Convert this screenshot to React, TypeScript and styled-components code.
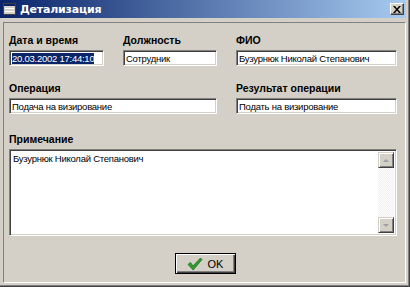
import * as React from "react"
import styled, { createGlobalStyle } from "styled-components"

const GlobalStyle = createGlobalStyle`
  html, body {
    margin: 0;
    padding: 0;
    background: #d4d0c8;
  }
  body {
    font-family: "Liberation Sans", Arial, sans-serif;
    font-size: 9.5px;
  }
`

function App() {
  return (
    <>
      <GlobalStyle />
      <Window>
        <TitleBar>
          <WindowIcon />
          <Title>Детализация</Title>
          <CloseButton>
            <svg width="8" height="7" viewBox="0 0 8 7">
              <path d="M0 0h2l2 2.5L6 0h2L5 3.5 8 7H6L4 4.5 2 7H0l3-3.5z" fill="#000" />
            </svg>
          </CloseButton>
        </TitleBar>
        <Client>
          <Bevel>
            <Fields>
              <Field>
                <Label>Дата и время</Label>
                <Edit>
                  <Selected>20.03.2002 17:44:10</Selected>
                </Edit>
              </Field>
              <Field>
                <Label>Должность</Label>
                <Edit>Сотрудник</Edit>
              </Field>
              <Field>
                <Label>ФИО</Label>
                <Edit>Бузурнюк Николай Степанович</Edit>
              </Field>
              <Field $span={2}>
                <Label>Операция</Label>
                <Edit>Подача на визирование</Edit>
              </Field>
              <Field>
                <Label>Результат операции</Label>
                <Edit>Подать на визирование</Edit>
              </Field>
              <Field $span={3} $offset={3}>
                <Label>Примечание</Label>
                <Memo>
                  <MemoText>Бузурнюк Николай Степанович</MemoText>
                  <ScrollBar>
                    <ScrollButton>
                      <Arrow $dir="up" />
                    </ScrollButton>
                    <ScrollButton>
                      <Arrow $dir="down" />
                    </ScrollButton>
                  </ScrollBar>
                </Memo>
              </Field>
            </Fields>
            <Footer>
              <OkButton>
                <svg width="16" height="14" viewBox="0 0 16 14">
                  <path
                    d="M1 7.5 L3.5 5.5 L6 9 L13.5 1 L15 2.5 L6.2 13 Z"
                    fill="#2e9e2e"
                    stroke="#1b6e1b"
                    strokeWidth="0.8"
                    strokeLinejoin="round"
                  />
                </svg>
                <span>OK</span>
              </OkButton>
            </Footer>
          </Bevel>
        </Client>
      </Window>
    </>
  )
}
export default App

function WindowIcon() {
  return (
    <svg width="13" height="12" viewBox="0 0 13 12">
      <rect x="0.5" y="0.5" width="12" height="11" fill="#d4d0c8" stroke="#404040" />
      <rect x="1" y="1" width="11" height="2" fill="#0a246a" />
      <rect x="2" y="5" width="9" height="1" fill="#ffffff" />
      <rect x="2" y="8" width="9" height="1" fill="#ffffff" />
    </svg>
  )
}

const Window = styled.div`
  width: 410px;
  height: 287px;
  box-sizing: border-box;
  display: flex;
  flex-direction: column;
  background: #d4d0c8;
  border-right: 1px solid #404040;
  border-bottom: 1px solid #404040;
  box-shadow: inset -1px -1px 0 #808080;
  padding: 0 3px 2px 0;
`

const TitleBar = styled.div`
  height: 18px;
  display: flex;
  align-items: center;
  padding: 0 2px 0 3px;
  background: linear-gradient(to right, #0a246a, #a6caf0);
  color: #fff;
`

const Title = styled.div`
  flex: 1;
  margin-left: 4px;
  font-family: Tahoma, "DejaVu Sans", "Liberation Sans", sans-serif;
  font-weight: bold;
  font-size: 11px;
  letter-spacing: -0.2px;
`

const CloseButton = styled.div`
  width: 14px;
  height: 12px;
  box-sizing: border-box;
  display: flex;
  align-items: center;
  justify-content: center;
  background: #d4d0c8;
  border-top: 1px solid #fff;
  border-left: 1px solid #fff;
  border-right: 1px solid #404040;
  border-bottom: 1px solid #404040;
  box-shadow: inset -1px -1px 0 #808080;
`

const Client = styled.div`
  flex: 1;
  display: flex;
  padding: 4px 0 1px 3px;
`

const Bevel = styled.div`
  flex: 1;
  display: flex;
  flex-direction: column;
  border-top: 1px solid #808080;
  border-left: 1px solid #808080;
  border-right: 1px solid #fff;
  border-bottom: 1px solid #fff;
  padding: 11px 0 0 5px;
`

const Fields = styled.div`
  display: grid;
  grid-template-columns: 95px 94px 161px;
  column-gap: 19px;
  row-gap: 16px;
`

const Field = styled.div<{ $span?: number; $offset?: number }>`
  display: flex;
  flex-direction: column;
  gap: 3px;
  grid-column: span ${(p) => p.$span ?? 1};
  margin-top: ${(p) => p.$offset ?? 0}px;
`

const Label = styled.div`
  height: 13px;
  line-height: 13px;
  font-family: "Liberation Sans", Arial, sans-serif;
  font-weight: bold;
  font-size: 10.5px;
  color: #000;
`

const Sunken = styled.div`
  box-sizing: border-box;
  background: #fff;
  border-top: 1px solid #808080;
  border-left: 1px solid #808080;
  border-right: 1px solid #fff;
  border-bottom: 1px solid #fff;
  box-shadow: inset 1px 1px 0 #404040, inset -1px -1px 0 #d4d0c8;
`

const Edit = styled(Sunken)`
  height: 16px;
  padding: 2px 2px 0 2px;
  line-height: 12px;
  white-space: nowrap;
  overflow: hidden;
  letter-spacing: -0.25px;
  color: #000;
`

const Selected = styled.span`
  background: #0a246a;
  color: #fff;
`

const Memo = styled(Sunken)`
  height: 87px;
  display: flex;
`

const MemoText = styled.div`
  flex: 1;
  padding: 3px 3px;
  line-height: 12px;
  letter-spacing: -0.25px;
`

const ScrollBar = styled.div`
  width: 16px;
  margin: 2px 2px 2px 0;
  display: flex;
  flex-direction: column;
  justify-content: space-between;
  background-color: #f4f3f0;
  background-image: repeating-conic-gradient(#f1efeb 0 25%, #ffffff 0 50%);
  background-size: 2px 2px;
`

const ScrollButton = styled.div`
  height: 16px;
  box-sizing: border-box;
  display: flex;
  align-items: center;
  justify-content: center;
  background: #d4d0c8;
  border-top: 1px solid #d4d0c8;
  border-left: 1px solid #d4d0c8;
  border-right: 1px solid #404040;
  border-bottom: 1px solid #404040;
  box-shadow: inset 1px 1px 0 #fff, inset -1px -1px 0 #808080;
`

const Arrow = styled.div<{ $dir: "up" | "down" }>`
  width: 0;
  height: 0;
  border-left: 3px solid transparent;
  border-right: 3px solid transparent;
  ${(p) =>
    p.$dir === "up" ? "border-bottom: 3px solid #a0a0a0;" : "border-top: 3px solid #a0a0a0;"}
`

const Footer = styled.div`
  display: flex;
  justify-content: center;
  padding-top: 17px;
  padding-right: 4px;
`

const OkButton = styled.div`
  width: 61px;
  height: 21px;
  box-sizing: border-box;
  display: flex;
  align-items: center;
  justify-content: center;
  gap: 5px;
  background: #d4d0c8;
  border: 1px solid #000;
  box-shadow: inset 1px 1px 0 #fff, inset -1px -1px 0 #404040, inset -2px -2px 0 #808080;
  font-family: "Liberation Sans", Arial, sans-serif;
  font-size: 11px;
  color: #000;
  span {
    margin-top: 1px;
  }
`
